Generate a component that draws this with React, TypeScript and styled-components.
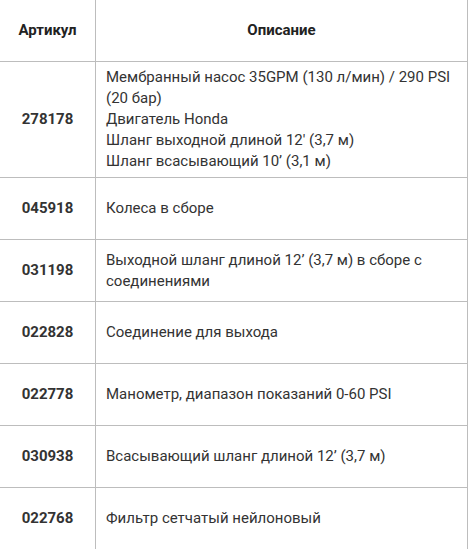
import React from "react";
import styled, { createGlobalStyle } from "styled-components";

const Global = createGlobalStyle`
  html, body { margin: 0; padding: 0; background: #fff; }
  body { font-family: Roboto, "Noto Sans", Arial, sans-serif; }
`;

const Table = styled.table`
  width: 468px;
  border-collapse: separate;
  border-spacing: 0;
  font-family: Roboto, Arial, sans-serif;
  font-size: 15px;
  line-height: 21px;
  color: #333;
`;

const Th = styled.th<{ $first?: boolean }>`
  box-sizing: border-box;
  height: 62px;
  padding: 5px 10px;
  font-weight: 700;
  font-size: 15px;
  color: #222;
  text-align: center;
  vertical-align: middle;
  border-bottom: 1px solid #bdbdbd;
  border-right: 1px solid #bdbdbd;
  width: ${(p) => (p.$first ? "96px" : "auto")};
`;

const Code = styled.td`
  box-sizing: border-box;
  height: 62px;
  padding: 5px 10px;
  font-weight: 700;
  color: #333;
  text-align: center;
  vertical-align: middle;
  border-bottom: 1px solid #bdbdbd;
  border-right: 1px solid #bdbdbd;
`;

const Desc = styled.td`
  box-sizing: border-box;
  height: 62px;
  padding: 5px 10px;
  text-align: left;
  vertical-align: middle;
  border-bottom: 1px solid #bdbdbd;
  border-right: 1px solid #bdbdbd;
`;

const rows: { code: string; lines: string[] }[] = [
  {
    code: "278178",
    lines: [
      "Мембранный насос 35GPM (130 л/мин) / 290 PSI (20 бар)",
      "Двигатель Honda",
      "Шланг выходной длиной 12' (3,7 м)",
      "Шланг всасывающий 10’ (3,1 м)",
    ],
  },
  { code: "045918", lines: ["Колеса в сборе"] },
  { code: "031198", lines: ["Выходной шланг длиной 12’ (3,7 м) в сборе с соединениями"] },
  { code: "022828", lines: ["Соединение для выхода"] },
  { code: "022778", lines: ["Манометр, диапазон показаний 0-60 PSI"] },
  { code: "030938", lines: ["Всасывающий шланг длиной 12’ (3,7 м)"] },
  { code: "022768", lines: ["Фильтр сетчатый нейлоновый"] },
];

export default function App() {
  return (
    <>
      <Global />
      <Table>
        <thead>
          <tr>
            <Th $first>Артикул</Th>
            <Th>Описание</Th>
          </tr>
        </thead>
        <tbody>
          {rows.map((r) => (
            <tr key={r.code}>
              <Code>{r.code}</Code>
              <Desc>
                {r.lines.map((l, i) => (
                  <React.Fragment key={i}>
                    {i > 0 && <br />}
                    {l}
                  </React.Fragment>
                ))}
              </Desc>
            </tr>
          ))}
        </tbody>
      </Table>
    </>
  );
}
